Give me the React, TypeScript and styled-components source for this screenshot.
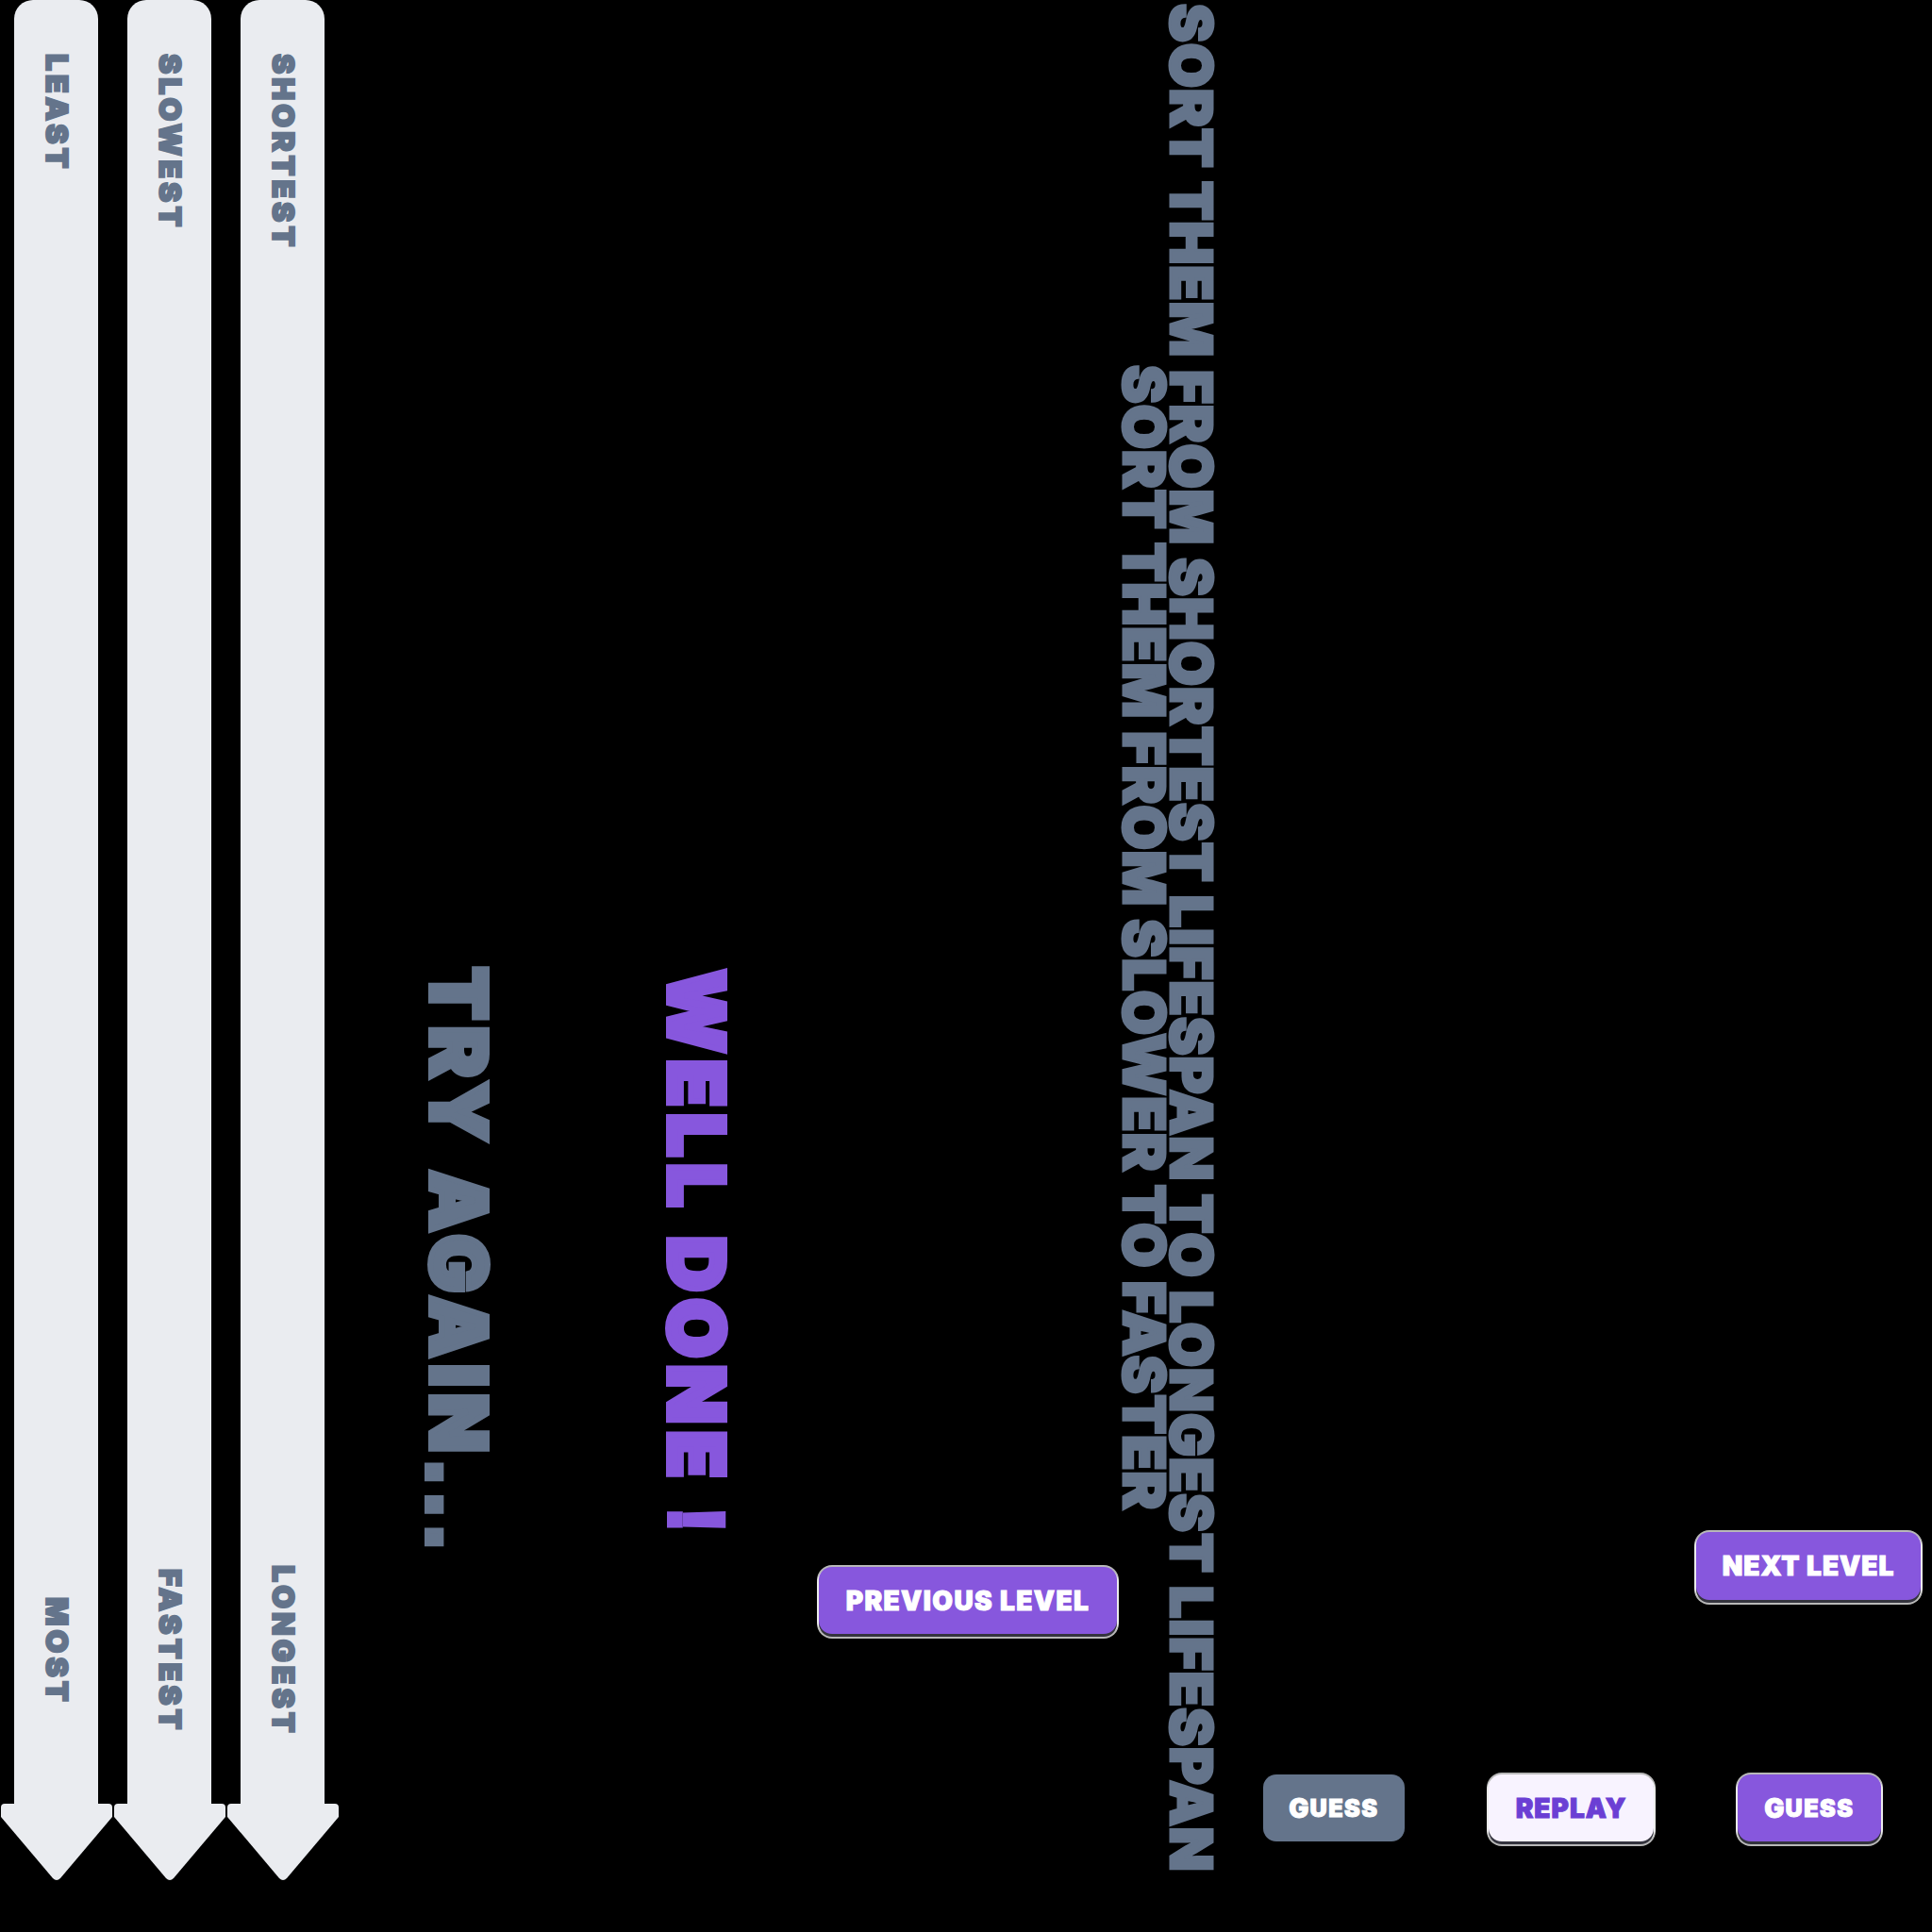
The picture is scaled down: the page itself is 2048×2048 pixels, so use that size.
import React from 'react';
import styled, { createGlobalStyle, css } from 'styled-components';

const PURPLE = '#8757dd';
const PURPLE_DARK = '#6b3fd4';
const SLATE = '#64748b';
const TRACK = '#eaecf0';
const FONT = "Inter, 'Liberation Sans', 'DejaVu Sans', sans-serif";

const GlobalStyle = createGlobalStyle`
    html, body {
        margin: 0;
        padding: 0;
        background: #000;
    }
    body {
        font-family: ${FONT};
    }
`;

const vertical = css`
    writing-mode: vertical-rl;
    white-space: nowrap;
    font-family: ${FONT};
    font-weight: 900;
    line-height: 1;
`;

const Page = styled.main`
    display: flex;
    align-items: flex-start;
    width: 2048px;
    height: 2048px;
    overflow: hidden;
    background: #000;
`;

// Scale arrows on the left
const Arrows = styled.div`
    display: flex;
    gap: 31px;
    padding-left: 15px;
    flex-shrink: 0;
`;

const Arrow = styled.div`
    display: flex;
    flex-direction: column;
    align-items: center;
    width: 89px;
`;

const Shaft = styled.div`
    display: flex;
    flex-direction: column;
    align-items: center;
    width: 89px;
    height: 1912px;
    background: ${TRACK};
    border-radius: 20px 20px 0 0;
`;

const EndLabel = styled.span`
    ${vertical}
    font-size: 32px;
    letter-spacing: 4px;
    color: ${SLATE};
    -webkit-text-stroke: 2px ${SLATE};
`;

const TopLabel = styled(EndLabel)`
    margin-top: 57px;
`;

const BottomSlot = styled.div`
    display: flex;
    align-items: center;
    justify-content: center;
    height: 200px;
    margin-top: auto;
    margin-bottom: 62px;
`;

const Head = styled.svg`
    display: block;
    flex-shrink: 0;
`;

// Feedback messages
const Messages = styled.div`
    display: flex;
    align-items: flex-start;
    gap: 170px;
    margin: 1025px 0 0 100px;
    flex-shrink: 0;
`;

const Shout = styled.h2<{ $tone: string; $offset?: number }>`
    ${vertical}
    width: 82px;
    margin: ${({ $offset }) => $offset ?? 0}px 0 0;
    font-size: 81px;
    letter-spacing: 7.5px;
    color: ${({ $tone }) => $tone};
    -webkit-text-stroke: 6px ${({ $tone }) => $tone};
`;

// square-dotted punctuation, as in the reference lettering
const Punct = styled.span<{ $scale?: number }>`
    font-family: 'Liberation Sans', Arial, sans-serif;
    font-weight: 700;
    font-size: ${({ $scale }) => $scale ?? 1}em;
    line-height: 0;
`;

// Buttons
const ring = css`
    box-shadow:
        0 3px 0 0 #34343e,
        0 3px 0 2px rgba(255, 255, 255, 0.72),
        0 0 0 2px rgba(255, 255, 255, 0.72);
`;

const Button = styled.button<{ $variant: 'primary' | 'muted' | 'light'; $width: number }>`
    display: inline-flex;
    align-items: center;
    justify-content: center;
    flex-shrink: 0;
    box-sizing: border-box;
    width: ${({ $width }) => $width}px;
    height: 71px;
    padding: 0;
    border: none;
    border-radius: 14px;
    font-family: ${FONT};
    font-weight: 900;
    font-size: 28px;
    letter-spacing: 1px;
    white-space: nowrap;
    cursor: pointer;
    -webkit-text-stroke: 1px currentColor;
    background: ${({ $variant }) =>
        $variant === 'muted' ? SLATE : $variant === 'light' ? '#f8f3ff' : PURPLE};
    color: ${({ $variant }) => ($variant === 'light' ? PURPLE_DARK : '#fff')};
    ${({ $variant }) => ($variant === 'muted' ? '' : ring)}
`;

const SmallCaps = styled.span`
    font-size: 0.9em;
    letter-spacing: 1.5px;
    text-transform: uppercase;
`;

const PrevButton = styled(Button)`
    margin: 1661px 0 0 90px;
    letter-spacing: 1.4px;
`;

// Instructions
const Instructions = styled.div`
    writing-mode: vertical-rl;
    height: 1988px;
    margin-left: 4px;
    text-align: center;
    flex-shrink: 0;
`;

const Line = styled.p`
    margin: 0;
    white-space: nowrap;
    font-family: ${FONT};
    font-weight: 900;
    font-size: 61px;
    line-height: 50px;
    letter-spacing: 1px;
    color: ${SLATE};
    -webkit-text-stroke: 3px ${SLATE};
`;

const Controls = styled.div`
    display: flex;
    flex-direction: column;
    width: 697px;
    margin: 1624px 0 0 51px;
    flex-shrink: 0;
`;

const NextButton = styled(Button)`
    align-self: flex-end;
    height: 72px;
`;

const Choices = styled.div`
    display: flex;
    align-items: flex-start;
    gap: 89px;
    margin-top: 185px;
`;

const SCALES = [
    { top: 'LEAST', bottom: 'MOST' },
    { top: 'SLOWEST', bottom: 'FASTEST' },
    { top: 'SHORTEST', bottom: 'LONGEST' },
];

function ArrowHead() {
    return (
        <Head width="118" height="82" viewBox="0 0 118 82">
            <path
                d="M4 0 H114 Q118 0 118 4 V14 L63 79 Q59 83 55 79 L0 14 V4 Q0 0 4 0 Z"
                fill={TRACK}
            />
        </Head>
    );
}

export default function App() {
    return (
        <>
            <GlobalStyle />
            <Page>
                <Arrows>
                    {SCALES.map(scale => (
                        <Arrow key={scale.top}>
                            <Shaft>
                                <TopLabel>{scale.top}</TopLabel>
                                <BottomSlot>
                                    <EndLabel>{scale.bottom}</EndLabel>
                                </BottomSlot>
                            </Shaft>
                            <ArrowHead />
                        </Arrow>
                    ))}
                </Arrows>

                <Messages>
                    <Shout $tone={SLATE}>
                        TRY AGAIN<Punct $scale={1.2}>...</Punct>
                    </Shout>
                    <Shout $tone={PURPLE} $offset={3}>
                        WELL DONE <Punct>!</Punct>
                    </Shout>
                </Messages>

                <PrevButton $variant="primary" $width={316}>
                    PREVIOUS LEVEL
                </PrevButton>

                <Instructions>
                    <Line>SORT THEM FROM SHORTEST LIFESPAN TO LONGEST LIFESPAN</Line>
                    <Line>SORT THEM FROM SLOWER TO FASTER</Line>
                </Instructions>

                <Controls>
                    <NextButton $variant="primary" $width={238}>
                        NEXT LEVEL
                    </NextButton>
                    <Choices>
                        <Button $variant="muted" $width={150}>
                            G<SmallCaps>uess</SmallCaps>
                        </Button>
                        <Button $variant="light" $width={175}>
                            REPLAY
                        </Button>
                        <Button $variant="primary" $width={152}>
                            G<SmallCaps>uess</SmallCaps>
                        </Button>
                    </Choices>
                </Controls>
            </Page>
        </>
    );
}
